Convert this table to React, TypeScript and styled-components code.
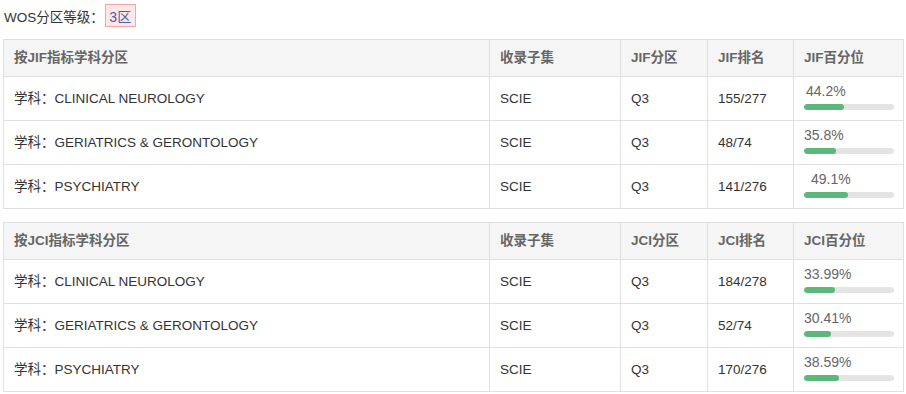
import React from "react";
import styled, { createGlobalStyle } from "styled-components";

const GlobalStyle = createGlobalStyle`
  body {
    margin: 0;
    background: #fff;
    font-family: "Liberation Sans", Arial, "Noto Sans CJK SC", sans-serif;
    font-size: 13.5px;
    color: #333;
  }
`;

const Page = styled.div`
  width: 900px;
  padding: 4px 0 0 3px;
`;

const LevelRow = styled.div`
  display: flex;
  align-items: center;
  height: 23px;
  padding-left: 1px;
  margin-bottom: 12px;
`;

const LevelLabel = styled.span`
  color: #333;
`;

const LevelBadge = styled.span`
  display: inline-flex;
  align-items: center;
  justify-content: center;
  box-sizing: border-box;
  width: 31px;
  height: 23px;
  margin-left: 1px;
  border: 1px solid #f3a6a6;
  background: #fde7e7;
  color: #4a5ea8;
  font-size: 14px;
`;

const Table = styled.table`
  width: 900px;
  border-collapse: collapse;
  table-layout: fixed;
  margin-bottom: 13px;
`;

const HeadCell = styled.th<{ $w: number }>`
  width: ${(p) => p.$w}px;
  height: 37px;
  padding: 0 10px;
  box-sizing: border-box;
  text-align: left;
  font-weight: bold;
  line-height: 18px;
  color: #666;
  background: #f5f5f5;
  border: 1px solid #e0e0e0;
`;

const Cell = styled.td`
  height: 44px;
  padding: 0 10px;
  box-sizing: border-box;
  line-height: 18px;
  color: #333;
  border: 1px solid #e0e0e0;
  vertical-align: middle;
`;

const PercentWrap = styled.div`
  display: flex;
  flex-direction: column;
  gap: 5px;
  margin-top: -4px;
`;

const PercentText = styled.span<{ $indent: number }>`
  color: #666;
  font-size: 14px;
  line-height: 16px;
  padding-left: ${(p) => p.$indent}px;
`;

const Track = styled.div`
  width: 90px;
  height: 6px;
  border-radius: 3px;
  background: #e4e4e4;
  overflow: hidden;
`;

const Fill = styled.div`
  height: 100%;
  border-radius: 3px;
  background: #5cb87a;
`;

type Row = {
  subject: string;
  set: string;
  zone: string;
  rank: string;
  pct: string;
  indent: number;
};

const widths = [486, 131, 87, 86, 110];

const jifRows: Row[] = [
  { subject: "CLINICAL NEUROLOGY", set: "SCIE", zone: "Q3", rank: "155/277", pct: "44.2", indent: 2 },
  { subject: "GERIATRICS & GERONTOLOGY", set: "SCIE", zone: "Q3", rank: "48/74", pct: "35.8", indent: 0 },
  { subject: "PSYCHIATRY", set: "SCIE", zone: "Q3", rank: "141/276", pct: "49.1", indent: 7 },
];

const jciRows: Row[] = [
  { subject: "CLINICAL NEUROLOGY", set: "SCIE", zone: "Q3", rank: "184/278", pct: "33.99", indent: 0 },
  { subject: "GERIATRICS & GERONTOLOGY", set: "SCIE", zone: "Q3", rank: "52/74", pct: "30.41", indent: 0 },
  { subject: "PSYCHIATRY", set: "SCIE", zone: "Q3", rank: "170/276", pct: "38.59", indent: 0 },
];

function ZoneTable({ metric, rows }: { metric: string; rows: Row[] }) {
  const heads = [
    `按${metric}指标学科分区`,
    "收录子集",
    `${metric}分区`,
    `${metric}排名`,
    `${metric}百分位`,
  ];
  return (
    <Table>
      <thead>
        <tr>
          {heads.map((h, i) => (
            <HeadCell key={h} $w={widths[i]}>
              {h}
            </HeadCell>
          ))}
        </tr>
      </thead>
      <tbody>
        {rows.map((r) => (
          <tr key={r.subject}>
            <Cell>学科：{r.subject}</Cell>
            <Cell>{r.set}</Cell>
            <Cell>{r.zone}</Cell>
            <Cell>{r.rank}</Cell>
            <Cell>
              <PercentWrap>
                <PercentText $indent={r.indent}>{r.pct}%</PercentText>
                <Track>
                  <Fill style={{ width: `${parseFloat(r.pct)}%` }} />
                </Track>
              </PercentWrap>
            </Cell>
          </tr>
        ))}
      </tbody>
    </Table>
  );
}

export default function App() {
  return (
    <Page>
      <GlobalStyle />
      <LevelRow>
        <LevelLabel>WOS分区等级：</LevelLabel>
        <LevelBadge>3区</LevelBadge>
      </LevelRow>
      <ZoneTable metric="JIF" rows={jifRows} />
      <ZoneTable metric="JCI" rows={jciRows} />
    </Page>
  );
}
